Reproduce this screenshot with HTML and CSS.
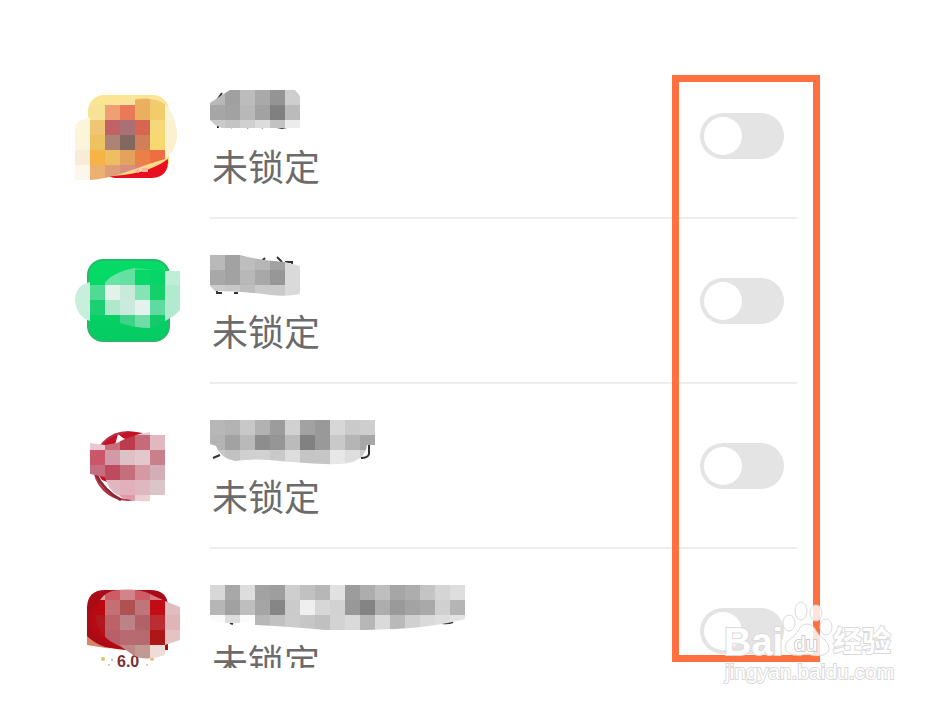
FILE: index.html
```html
<!DOCTYPE html>
<html lang="zh-CN">
<head>
<meta charset="utf-8">
<title>应用锁</title>
<link rel="stylesheet" href="styles.css">
</head>
<body>
<main class="panel">
  <ul class="apps">
    <li class="app">
      <svg class="icon" viewBox="70 84 120 105" aria-hidden="true">
        <defs>
          <linearGradient id="gold" x2="0" y2="1"><stop offset="0" stop-color="#fbe594"/><stop offset="1" stop-color="#fcd983"/></linearGradient>
          <clipPath id="i1"><path d="M75 125Q81 119 90 117V105H105Q125 102 138 99Q155 97 166 105Q178 118 177 139Q174 153 165 159Q148 164 138 168L120 174Q105 179 90 180H75Z"/></clipPath>
        </defs>
        <rect x="88" y="95" width="81" height="82" rx="16" fill="url(#gold)"/>
        <path d="M105 176Q145 176 168 159Q169 177 152 178H115Z" fill="#e81020"/>
        <g data-mosaic="75 90" clip-path="url(#i1)" data-cells="fdf6df,fbe390,fbe8a0,fae5a0,eab160,f0cb75,fcf3d5,fcf5d8/fdf6df,f7e398,efa073,ea7957,ebaf60,f2cc6a,fbf3d6,fbf3d6/fbf5da,f0c573,c16366,aa7076,d66650,f6d879,fbf1ce,fbf1ce/fcf5dc,edc261,ad8376,826861,d08058,f9d871,fbf1d0,fbf1d0/f8ebd8,f5b348,edbf62,e4a35c,ea7f49,ef6d42,fcf2d0,fcf2d0/fdf7eb,ecb071,df9d78,d98f80,dc8274,f04432,ec3830,fcf2d0"></g>
        <path d="M135 171l4-2v4zm7-3h6v4h-6z" fill="#f7b1a9"/>
      </svg>
      <div class="body">
        <div class="label">
          <svg class="name" viewBox="0 0 270 45" aria-hidden="true">
            <defs><clipPath id="n1"><path d="M0 13L15 3L20 0H85L90 6V38H12L5 35L0 30Z"/></clipPath></defs>
            <path d="M7 10L12 3M17 6L19 2M8 34V38M20 35L22 38M40 36L37 38M50 36L53 38M67 37L72 38L77 37" class="ink"/>
            <g data-mosaic="0 0" clip-path="url(#n1)" data-cells="b8b8b8,a0a0a0,bcbcbc,a9a9a9,949494,cecece/a6a6a6,a2a2a2,b8b8b8,a2a2a2,808080,bbbbbb/cacaca,c4c4c4,d0d0d0,dcdcdc,c2c2c2,ececec"></g>
          </svg>
          <span class="status" id="s1">未锁定</span>
        </div>
        <input class="switch" type="checkbox" role="switch" aria-labelledby="s1">
      </div>
    </li>
    <li class="app">
      <svg class="icon" viewBox="70 249 120 105" aria-hidden="true">
        <defs>
          <linearGradient id="green" x2="0" y2="1"><stop offset="0" stop-color="#05dc67"/><stop offset="1" stop-color="#05cb63"/></linearGradient>
          <clipPath id="i2"><path d="M90 282Q75 285 75 301Q77 317 90 321V315H120V323Q135 328 150 328Q158 327 165 321Q175 316 180 310V271H165L135 268Q112 272 103 285Z"/></clipPath>
        </defs>
        <rect x="88" y="260" width="81" height="81" rx="15" fill="url(#green)" stroke="#25ba68" stroke-width="2"/>
        <g data-mosaic="75 255" clip-path="url(#i2)" data-cells="c7efdb,05dc67,6ae4a5,6ae4a5,3ddc8a,45dd8d,b8edd2/c7efdb,05d965,6ae4a5,64e1a1,08d86a,08d567,beeed6/c8efdd,50da94,e2f2eb,c9e9db,84e4b6,13d06b,b2ead0/c8efdd,1bcf72,aee9cc,cce9dd,e4f2ec,5edba0,b2ead0/c8efdd,07cd65,07cd65,3fd38a,70dca6,13cb69,b2ead0"></g>
      </svg>
      <div class="body">
        <div class="label">
          <svg class="name" viewBox="0 0 270 45" aria-hidden="true">
            <defs><clipPath id="n2"><path d="M0 0H30Q48 5 75 7L90 11V39Q78 42 60 40Q30 36 5 36L0 31Z"/></clipPath></defs>
            <path d="M7 35V38H12M24 38H28M52 6L55 3M67 2L72 7M75 7H82V10" class="ink"/>
            <g data-mosaic="0 0" clip-path="url(#n2)" data-cells="b9b9b9,a2a2a2,bebebe,b6b6b6,a2a2a2,dadada/a8a8a8,a2a2a2,b8b8b8,a8a8a8,979797,dadada/cccccc,c8c8c8,bebebe,cacaca,cacaca,dadada"></g>
          </svg>
          <span class="status" id="s2">未锁定</span>
        </div>
        <input class="switch" type="checkbox" role="switch" aria-labelledby="s2">
      </div>
    </li>
    <li class="app">
      <svg class="icon" viewBox="70 414 120 105" aria-hidden="true">
        <defs><clipPath id="i3"><path d="M90 443L105 445L117 443Q130 435 150 432V435H165V495H150V501Q120 503 109 487L105 477L90 474Z"/></clipPath></defs>
        <circle cx="128" cy="466" r="34" fill="#fff" stroke="#b53249" stroke-width="2"/>
        <path d="M101 446Q116 428 143 433L130 441L123 438L118 434L115 445Z" fill="#c51026"/>
        <path d="M96 474Q103 490 121 500" fill="none" stroke="#8e2835" stroke-width="3"/>
        <path d="M98 474l7 2 2 6-5-2z" fill="#c51026"/>
        <g data-mosaic="90 420" clip-path="url(#i3)" data-cells="e9c9cf,ca7180,c03a4d,eacdd2,eacdd2/e9c9cf,ca6c7a,bc3c4d,c66b7a,e2b8c0/cb5669,d499a6,dec1c7,e2c8cd,ca808c/c46e7f,bd4b5d,c56e7e,d499a3,d4aeb6/c46e7f,dfb7c0,e2b0ba,dfb7c0,dcc5c9/dfa8b4,eed7dc,dd9cab,e9cfd4,e9cfd4"></g>
      </svg>
      <div class="body">
        <div class="label">
          <svg class="name" viewBox="0 0 270 45" aria-hidden="true">
            <defs><clipPath id="n3"><path d="M0 0H165V25H157Q156 36 145 41Q135 45 115 44Q90 43 70 41Q48 38 25 41Q10 38 6 26L0 24Z"/></clipPath></defs>
            <path d="M3 38L10 35M159 24V34Q158 38 151 38" class="ink"/>
            <g data-mosaic="0 0" clip-path="url(#n3)" data-cells="b7b7b7,b3b3b3,c8c8c8,b2b2b2,9c9c9c,d1d1d1,a2a2a2,999999,d7d7d7,cacaca,cecece/b4b4b4,a2a2a2,b9b9b9,8d8d8d,969696,bbbbbb,818181,999999,c9c9c9,b5b5b5,a7a7a7/c8c8c8,c2c2c2,d0d0d0,d1d1d1,c9c9c9,dddddd,c5c5c5,c6c6c6,e7e7e7,dedede,cccccc"></g>
          </svg>
          <span class="status" id="s3">未锁定</span>
        </div>
        <input class="switch" type="checkbox" role="switch" aria-labelledby="s3">
      </div>
    </li>
    <li class="app">
      <svg class="icon" viewBox="70 579 120 105" aria-hidden="true">
        <defs>
          <radialGradient id="red"><stop offset="0" stop-color="#d71020"/><stop offset=".65" stop-color="#ca0710"/><stop offset="1" stop-color="#a80b15"/></radialGradient>
          <clipPath id="i4"><path d="M100 600Q106 591 117 590Q140 588 150 594L165 601L180 607V640L165 645V655Q145 662 133 655L120 646Q98 638 95 615Z"/></clipPath>
        </defs>
        <path d="M87 644V607Q88 590 105 590H150Q168 590 168 607V650H125Q100 647 87 644Z" fill="url(#red)"/>
        <path d="M87 636Q100 649 125 651L87 645Z" fill="#d88469"/>
        <g fill="#e5bd75"><circle cx="103" cy="659" r="2"/><circle cx="152" cy="659" r="2"/><circle cx="109" cy="665" r="1"/><circle cx="147" cy="665" r="1"/></g>
        <circle cx="112" cy="660" r="1" fill="#a1b8a0"/>
        <text class="version" x="117" y="667">6.0</text>
        <g data-mosaic="90 585" clip-path="url(#i4)" data-cells="dba1a3,ce5c65,d38489,ce5c65,d77880,dfb0b5/bb0811,c36f76,ae5151,c0757a,c10b15,e1bdc0/b0181f,bd6267,bb8288,b16168,bb2d33,dfb5b8/b0171d,b8606a,b76a70,b66b71,ae1717,e5c3c5/ca7777,c48683,bd8885,c39994,f0dcd7,eecbc8"></g>
      </svg>
      <div class="body">
        <div class="label">
          <svg class="name" viewBox="0 0 270 45" aria-hidden="true">
            <defs><clipPath id="n4"><path d="M0 0H255V34Q225 42 185 44L155 45H115Q85 42 45 40V38H15L0 35Z"/></clipPath></defs>
            <path d="M20 38L23 39M232 38Q238 39 243 37" class="ink"/>
            <g data-mosaic="0 0" clip-path="url(#n4)" data-cells="d8d8d8,a8a8a8,dddddd,a2a2a2,9e9e9e,cecece,c1c1c1,b7b7b7,e1e1e1,9c9c9c,adadad,bebebe,a6a6a6,adadad,c4c4c4,d5d5d5,dedede/b6b6b6,a1a1a1,bebebe,a5a5a5,868686,cbcbcb,efefef,d7d7d7,d2d2d2,989898,848484,adadad,9a9a9a,a3a3a3,a9a9a9,d0d0d0,b5b5b5/fafafa,dedede,fcfcfc,b7b7b7,c1c1c1,cccccc,c6c6c6,c0c0c0,d3d3d3,dadada,b7b7b7,dadada,b9b9b9,d0d0d0,dadada,dedede,e3e3e3"></g>
          </svg>
          <span class="status" id="s4">未锁定</span>
        </div>
        <input class="switch" type="checkbox" role="switch" aria-labelledby="s4">
      </div>
    </li>
  </ul>
  <div class="highlight"></div>
  <svg class="watermark" viewBox="720 600 180 90" role="img" aria-label="Baidu 经验">
    <g class="paw">
      <ellipse cx="789" cy="623" rx="6" ry="8"/>
      <ellipse cx="801" cy="611" rx="6" ry="9"/>
      <ellipse cx="816" cy="613" rx="6" ry="8"/>
      <ellipse cx="826" cy="627" rx="6" ry="8"/>
      <path d="M807 624Q813 624 816 631Q819 636 825 640Q834 650 824 655Q816 657 807 654Q800 656 793 655Q780 651 788 641Q795 636 798 631Q801 624 807 624Z"/>
    </g>
    <text class="brand" x="724" y="655">Bai</text>
    <text class="du" x="794" y="651">du</text>
    <text class="cn" x="833" y="652">经验</text>
    <text class="url" x="725" y="679">jingyan.baidu.com</text>
  </svg>
</main>
<script src="mosaic.js"></script>
</body>
</html>
```
FILE: styles.css
```css
* { box-sizing: border-box; }

body {
  margin: 0;
  background: #fff;
  font-family: "Liberation Sans", "Noto Sans CJK SC", sans-serif;
}

.panel {
  position: relative;
  margin: 54px 147px 36px 70px;
}

.apps {
  margin: 0;
  padding: 0;
  list-style: none;
}

.app {
  display: flex;
  align-items: flex-start;
  gap: 20px;
}

/* The list is cut off part-way through its last row. */
.app:last-child {
  max-height: 119px;
  overflow: hidden;
}

.icon {
  flex: none;
  width: 120px;
  height: 105px;
  margin-top: 30px;
}

.body {
  display: flex;
  flex: 1;
  justify-content: space-between;
  align-items: flex-start;
  min-height: 165px;
  padding-right: 13px;
  border-bottom: 2px solid #ededed;
}

.label {
  display: flex;
  flex-direction: column;
  gap: 8px;
  padding-top: 36px;
}

.name {
  width: 270px;
  height: 45px;
}

.ink {
  fill: none;
  stroke: #333;
  stroke-width: 2;
}

.status {
  padding-left: 2px;
  color: #6b6b6b;
  font-family: "Noto Sans CJK SC", sans-serif;
  font-size: 36px;
  line-height: 44px;
}

.switch {
  appearance: none;
  flex: none;
  width: 84px;
  height: 46px;
  margin: 59px 0 0;
  padding: 4px;
  border-radius: 23px;
  background: #e4e4e4;
}

.switch::before {
  content: "";
  display: block;
  width: 38px;
  height: 38px;
  border-radius: 50%;
  background: #fff;
}

.switch:checked { background: #3c8cff; }
.switch:checked::before { margin-left: auto; }

.highlight {
  position: absolute;
  top: 21px;
  right: -23px;
  bottom: 6px;
  width: 148px;
  border: 7px solid #fe7040;
  pointer-events: none;
}

.watermark {
  position: absolute;
  right: -103px;
  bottom: -22px;
  width: 180px;
  height: 90px;
  pointer-events: none;
}

.watermark text,
.paw {
  fill: rgba(255, 255, 255, 0.8);
  stroke: #dadada;
  stroke-width: 1px;
}

.watermark text {
  fill: #fff;
  paint-order: stroke;
  stroke-width: 2px;
}

.brand { font-size: 38px; font-weight: bold; }
.watermark .du { font-size: 21px; stroke: #ccc; }
.cn { font-family: "Noto Sans CJK SC", sans-serif; font-size: 29px; font-weight: bold; }
.url { font-size: 21px; }

.version {
  fill: #7c3030;
  font-size: 16px;
  font-weight: bold;
}
```
FILE: mosaic.js
```js
// Fills each privacy mosaic with 15px tiles; rows are split by "/", tiles by ",".
const TILE = 15;
document.querySelectorAll("[data-mosaic]").forEach((group) => {
  const [left, top] = group.dataset.mosaic.split(" ").map(Number);
  group.dataset.cells.split("/").forEach((row, r) => {
    row.split(",").forEach((color, c) => {
      const tile = document.createElementNS("http://www.w3.org/2000/svg", "rect");
      tile.setAttribute("x", left + c * TILE);
      tile.setAttribute("y", top + r * TILE);
      tile.setAttribute("width", TILE);
      tile.setAttribute("height", TILE);
      tile.setAttribute("fill", "#" + color);
      group.append(tile);
    });
  });
});
```
